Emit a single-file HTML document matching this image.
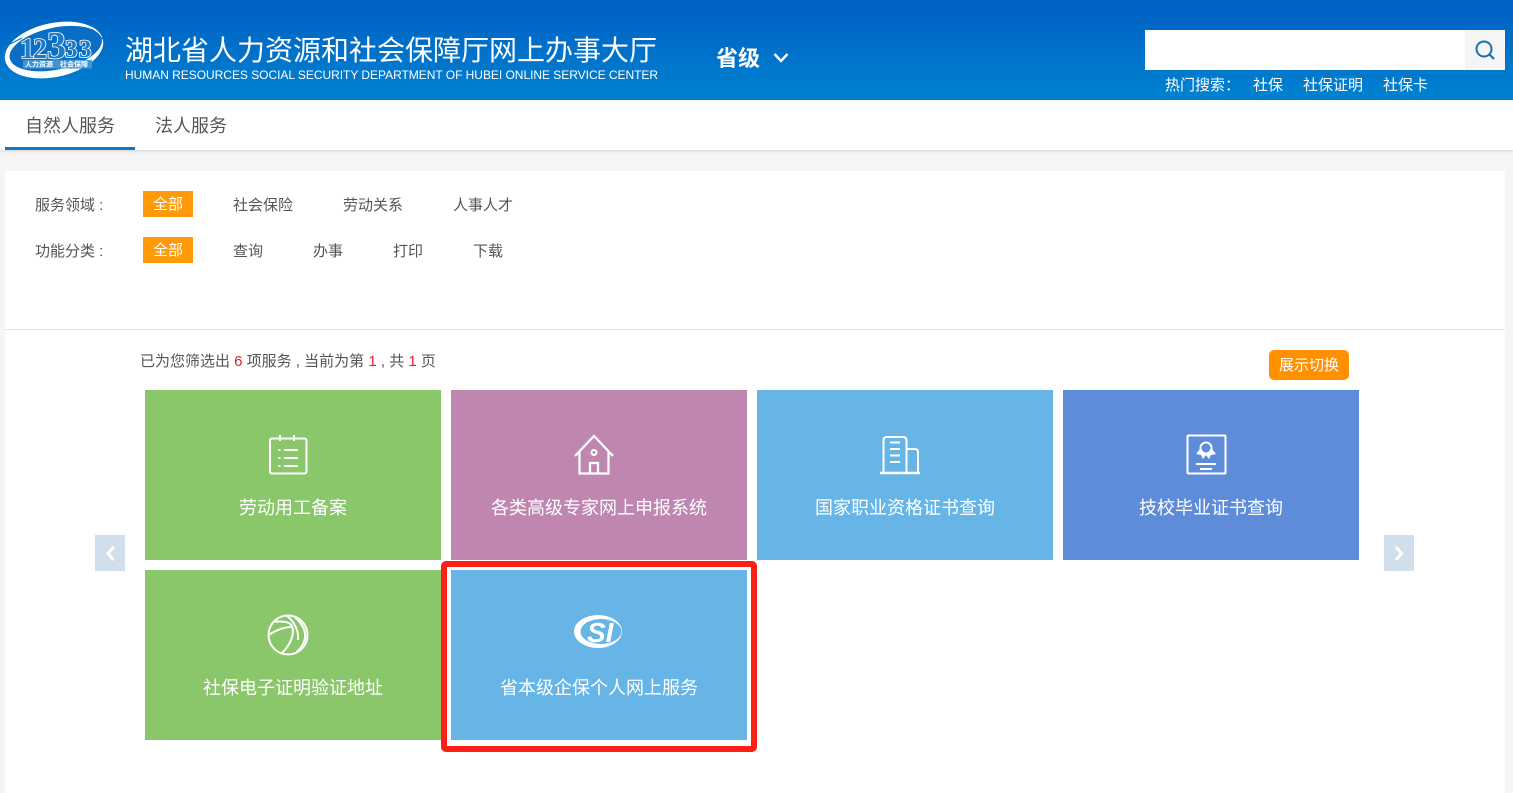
<!DOCTYPE html>
<html lang="zh"><head><meta charset="utf-8"><title>湖北省人力资源和社会保障厅网上办事大厅</title>
<style>
html,body{margin:0;padding:0}
body{width:1513px;height:793px;overflow:hidden;position:relative;background:#f5f5f5;font-family:"Liberation Sans","Noto Sans CJK SC",sans-serif;color:#555}
.a{position:absolute;white-space:nowrap}
.hd{left:0;top:0;width:1513px;height:100px;background:linear-gradient(#005fc3,#0082d0)}
.nav{left:0;top:100px;width:1513px;height:50px;background:#fff;box-shadow:0 1px 3px rgba(0,0,0,.14)}
.main{left:5px;top:171px;width:1500px;height:622px;background:#fff}
.t{font-size:15px;line-height:20px;color:#555}
.tag{width:50px;height:26px;line-height:28px;background:#ff9a0b;color:#fff;text-align:center;font-size:15px}
.c{width:296px;height:170px;color:#fff;font-size:18px;text-align:center;line-height:26px}
.c span{position:absolute;left:0;width:296px;top:105px}
.arr{width:30px;height:36px;background:#d1deeb}
.g{background:#89c76a}.p{background:#bf87b0}.b{background:#66b5e6}.d{background:#5e8cd9}
svg{position:absolute;left:0;top:0;overflow:visible}
</style></head><body>
<div class="a hd"></div>

<svg width="110" height="70" style="left:0;top:15px" viewBox="0 0 110 70">
<g transform="rotate(-12 54 35)"><ellipse cx="54" cy="35" rx="50" ry="27" fill="#fff"/><ellipse cx="56" cy="34" rx="47" ry="21" fill="#0a6fc4"/></g>
<path d="M2 33L22 23M92 14L106 27" stroke="#0a6fc4" stroke-width="1" fill="none"/>
<rect x="23" y="45" width="69" height="8.500" rx="1" fill="#3d94d6"/>
<g font-family="Liberation Serif,serif" font-weight="bold" fill="#1a7cc8" stroke="#fff" stroke-width="1.600" paint-order="stroke">
<text x="20" y="43" font-size="29">1</text><text x="33" y="43" font-size="28">2</text><text x="47" y="43" font-size="38">3</text><text x="65" y="42" font-size="25">3</text><text x="79" y="42" font-size="25">3</text></g>
<text x="25" y="51.500" font-size="7" font-weight="bold" fill="#fff">人力资源</text><text x="60" y="51.500" font-size="7" font-weight="bold" fill="#fff">社会保障</text>
</svg>

<div class="a" style="left:125px;top:33px;font-size:28px;line-height:36px;color:#fff">湖北省人力资源和社会保障厅网上办事大厅</div>
<div class="a" style="left:125px;top:67px;font-size:12px;line-height:16px;color:#fff;letter-spacing:-.03px">HUMAN RESOURCES SOCIAL SECURITY DEPARTMENT OF HUBEI ONLINE SERVICE CENTER</div>
<div class="a" style="left:716px;top:43px;font-size:22px;line-height:32px;color:#fff;font-weight:bold">省级</div>
<svg width="1513" height="100"><path d="M774.500 54 L781 61 L787.500 54" fill="none" stroke="#fff" stroke-width="2.400"/></svg>

<div class="a" style="left:1145px;top:30px;width:320px;height:40px;background:#fff"></div>
<div class="a" style="left:1465px;top:30px;width:40px;height:40px;background:#f5f5f5"></div>
<svg width="1513" height="100"><circle cx="1484" cy="49" r="7.500" fill="none" stroke="#1a72b5" stroke-width="2"/><path d="M1489.500 54.500L1494 59" stroke="#1a72b5" stroke-width="2.200" fill="none"/></svg>
<div class="a t" style="left:1165px;top:76px;color:#fff">热门搜索：</div>
<div class="a t" style="left:1253px;top:76px;color:#fff">社保</div>
<div class="a t" style="left:1303px;top:76px;color:#fff">社保证明</div>
<div class="a t" style="left:1383px;top:76px;color:#fff">社保卡</div>

<div class="a nav"></div>
<div class="a" style="left:25px;top:113px;font-size:18px;line-height:26px;color:#555">自然人服务</div>
<div class="a" style="left:155px;top:113px;font-size:18px;line-height:26px;color:#555">法人服务</div>
<div class="a" style="left:5px;top:147px;width:130px;height:3px;background:#0f78c4"></div>

<div class="a main"></div>
<div class="a t" style="left:35px;top:196px">服务领域 :</div>
<div class="a tag" style="left:143px;top:191px">全部</div>
<div class="a t" style="left:233px;top:196px">社会保险</div>
<div class="a t" style="left:343px;top:196px">劳动关系</div>
<div class="a t" style="left:453px;top:196px">人事人才</div>
<div class="a t" style="left:35px;top:242px">功能分类 :</div>
<div class="a tag" style="left:143px;top:237px">全部</div>
<div class="a t" style="left:233px;top:242px">查询</div>
<div class="a t" style="left:313px;top:242px">办事</div>
<div class="a t" style="left:393px;top:242px">打印</div>
<div class="a t" style="left:473px;top:242px">下载</div>
<div class="a" style="left:5px;top:329px;width:1500px;height:1px;background:#e3e3e3"></div>

<div class="a t" style="left:140px;top:352px">已为您筛选出 <span style="color:#e0202a">6</span> 项服务 , 当前为第 <span style="color:#e0202a">1</span> , 共 <span style="color:#e0202a">1</span> 页</div>
<div class="a" style="left:1269px;top:350px;width:80px;height:30px;line-height:31px;background:#ff9000;border-radius:5px;color:#fff;text-align:center;font-size:15px">展示切换</div>

<div class="a arr" style="left:95px;top:535px"></div>
<div class="a arr" style="left:1384px;top:535px"></div>
<svg width="1513" height="793"><path d="M113.500 547L108 553.500L113.500 560" fill="none" stroke="#fff" stroke-width="3"/><path d="M1396 547L1401.500 553.500L1396 560" fill="none" stroke="#fff" stroke-width="3"/></svg>

<div class="a c g" style="left:145px;top:390px"><span>劳动用工备案</span></div>
<div class="a c p" style="left:451px;top:390px"><span>各类高级专家网上申报系统</span></div>
<div class="a c b" style="left:757px;top:390px"><span>国家职业资格证书查询</span></div>
<div class="a c d" style="left:1063px;top:390px"><span>技校毕业证书查询</span></div>
<div class="a c g" style="left:145px;top:570px"><span>社保电子证明验证地址</span></div>
<div class="a c b" style="left:451px;top:570px"><span>省本级企保个人网上服务</span></div>

<div class="a" style="left:441px;top:561px;width:316px;height:191px;box-sizing:border-box;border:6px solid #fb2015;border-radius:5px"></div>

<svg width="1513" height="793" fill="none" stroke="#fff" stroke-width="2">
<rect x="270" y="438.500" width="36.500" height="35" rx="2"/>
<path d="M280 435v6M294 435v6M284 450h14M284 458h14M284 466h14"/>
<path d="M278.500 450h2M278.500 458h2M278.500 466h2"/>

<path d="M575 456L594 436L613 456M579.500 452V473.500H608.500V452M590 473.500V463H598V473.500" stroke-width="2.200"/>
<circle cx="594" cy="452.500" r="2.500"/>

<path d="M880 473h40" stroke-width="2.500"/>
<path d="M883.500 473V440a3 3 0 0 1 3-3h17a3 3 0 0 1 3 3V473M907 449h8a3 3 0 0 1 3 3V473"/>
<path d="M890 442.500h10M890 449h10M890 455.500h10M890 462h10" stroke-width="2"/>

<rect x="1187.500" y="435.500" width="38" height="38" rx="1"/>
<circle cx="1206" cy="448" r="5.500"/>
<path d="M1200 449L1196 454L1201 455L1203 459L1206 455L1209 459L1211 455L1216 454L1212 449Z" fill="#fff" stroke="none"/>
<circle cx="1206" cy="448" r="4.500" fill="#5e8cd9" stroke="none"/>
<path d="M1196 464h20M1200 469h12"/>

<circle cx="288" cy="635" r="19.500"/>
<path d="M268.500 635C276 630 285 627 292.700 626.700M275 621.700C283 621 290 622 292 626C295 634 290 646 281.700 653M295 617.300C303 624 306 632 305 638C304 644 301 648 296.700 651.700M287 616C295 622 299 632 298 640"/>
</svg>

<svg width="1513" height="793">
<ellipse cx="598" cy="631.500" rx="24" ry="16.500" fill="#fff"/>
<ellipse cx="601" cy="631.500" rx="20.500" ry="12.500" fill="#66b5e6"/>
<text x="587" y="642" font-family="Liberation Sans,sans-serif" font-style="italic" font-weight="bold" font-size="28" fill="#fff">SI</text>
</svg>
</body></html>
